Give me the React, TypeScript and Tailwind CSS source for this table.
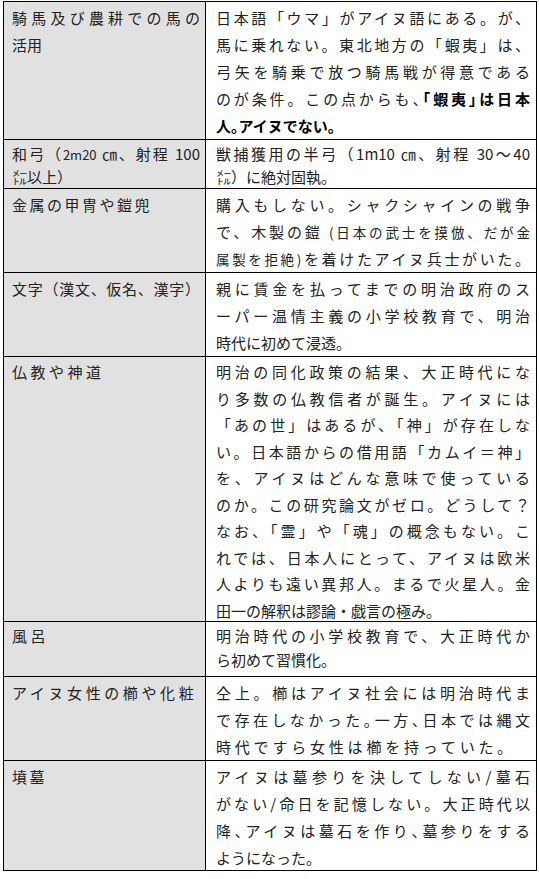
import type { ReactNode } from "react";

type Line = { c: ReactNode; j?: boolean; cls?: string };
type Row = { h: string; lh: string; left: Line[]; right: Line[] };

const B = ({ children }: { children: ReactNode }) => (
  <span className="font-bold text-black">{children}</span>
);

const Sm = ({ children }: { children: ReactNode }) => (
  <span className="text-[13.5px] leading-none">{children}</span>
);

// half-width punctuation, as Word squeezes it on full lines
const H = ({ children }: { children: ReactNode }) => (
  <span className="[font-feature-settings:'halt']">{children}</span>
);

const rows: Row[] = [
  {
    h: "h-[138px]",
    lh: "leading-[27px]",
    left: [{ c: "騎馬及び農耕での馬の", j: true }, { c: "活用" }],
    right: [
      { c: "日本語「ウマ」がアイヌ語にある。が、", j: true },
      { c: "馬に乗れない。東北地方の「蝦夷」は、", j: true },
      { c: "弓矢を騎乗で放つ騎馬戦が得意である", j: true },
      {
        c: (
          <>
            のが条件。この点からも<H>、</H>
            <B>
              <H>「</H>蝦夷<H>」</H>は日本
            </B>
          </>
        ),
        j: true,
      },
      {
        c: (
          <B>
            人<H>。</H>アイヌでない。
          </B>
        ),
      },
    ],
  },
  {
    h: "h-[49px]",
    lh: "leading-[23px]",
    left: [
      {
        c: (
          <>
            和弓（<span className="text-[13px] leading-none">2m20</span> ㎝、射程 100
          </>
        ),
        j: true,
      },
      { c: "㍍以上）" },
    ],
    right: [
      { c: "獣捕獲用の半弓（1m10 ㎝、射程 30～40", j: true },
      { c: "㍍）に絶対固執。" },
    ],
  },
  {
    h: "h-[84px]",
    lh: "leading-[27px]",
    left: [{ c: "金属の甲冑や鎧兜", cls: "tracking-[2.5px]" }],
    right: [
      { c: "購入もしない。シャクシャインの戦争", j: true },
      {
        c: (
          <>
            で、木製の鎧 <Sm>(日本の武士を摸倣、だが金</Sm>
          </>
        ),
        j: true,
      },
      {
        c: (
          <>
            <Sm>属製を拒絶)</Sm>を着けたアイヌ兵士がいた。
          </>
        ),
        j: true,
      },
    ],
  },
  {
    h: "h-[84px]",
    lh: "leading-[27px]",
    left: [{ c: "文字（漢文、仮名、漢字）", j: true }],
    right: [
      { c: "親に賃金を払ってまでの明治政府のス", j: true },
      { c: "ーパー温情主義の小学校教育で、明治", j: true },
      { c: "時代に初めて浸透。" },
    ],
  },
  {
    h: "h-[265px]",
    lh: "leading-[26.5px]",
    left: [{ c: "仏教や神道", cls: "tracking-[3.5px]" }],
    right: [
      { c: "明治の同化政策の結果、大正時代にな", j: true },
      { c: "り多数の仏教信者が誕生。アイヌには", j: true },
      { c: "「あの世」はあるが、「神」が存在しな", j: true },
      { c: "い。日本語からの借用語「カムイ＝神」", j: true },
      { c: "を、アイヌはどんな意味で使っている", j: true },
      { c: "のか。この研究論文がゼロ。どうして？", j: true },
      { c: "なお、「霊」や「魂」の概念もない。こ", j: true },
      { c: "れでは、日本人にとって、アイヌは欧米", j: true },
      { c: "人よりも遠い異邦人。まるで火星人。金", j: true },
      { c: "田一の解釈は謬論・戯言の極み。" },
    ],
  },
  {
    h: "h-[55px]",
    lh: "leading-[24px]",
    left: [{ c: "風呂", cls: "tracking-[3.5px]" }],
    right: [
      { c: "明治時代の小学校教育で、大正時代か", j: true },
      { c: "ら初めて習慣化。" },
    ],
  },
  {
    h: "h-[84px]",
    lh: "leading-[27px]",
    left: [{ c: "アイヌ女性の櫛や化粧", cls: "tracking-[3.6px]" }],
    right: [
      { c: "仝上。櫛はアイヌ社会には明治時代ま", j: true },
      {
        c: (
          <>
            で存在しなかった<H>。</H>一方<H>、</H>日本では縄文
          </>
        ),
        j: true,
      },
      { c: "時代ですら女性は櫛を持っていた。", cls: "tracking-[3.8px]" },
    ],
  },
  {
    h: "h-[110px]",
    lh: "leading-[27px]",
    left: [{ c: "墳墓", cls: "tracking-[2.5px]" }],
    right: [
      { c: "アイヌは墓参りを決してしない/墓石", j: true },
      { c: "がない/命日を記憶しない。大正時代以", j: true },
      {
        c: (
          <>
            降<H>、</H>アイヌは墓石を作り<H>、</H>墓参りをする
          </>
        ),
        j: true,
      },
      { c: "ようになった。" },
    ],
  },
];

function TextLine({ line }: { line: Line }) {
  const align = line.j ? "text-justify [text-align-last:justify]" : "text-left";
  return <div className={`whitespace-nowrap ${align} ${line.cls ?? ""}`}>{line.c}</div>;
}

export default function App() {
  return (
    <div className="min-h-[879px] bg-white pt-[1px] pl-[3px] font-['Noto_Sans_CJK_JP','Noto_Sans',sans-serif] text-[15px] text-[#222]">
      <div className="w-[534px] border-t border-r border-l border-black">
        {rows.map((row, i) => (
          <div
            key={i}
            className={`grid grid-cols-[202px_1fr] grid-rows-[minmax(0,1fr)] overflow-hidden border-b border-black ${row.h} ${row.lh}`}
          >
            <div className="border-r border-black bg-[#e1e1e1] pt-[2px] pr-[5px] pl-[8px]">
              {row.left.map((l, k) => (
                <TextLine key={k} line={l} />
              ))}
            </div>
            <div className="pt-[2px] pr-[6px] pl-[10px]">
              {row.right.map((l, k) => (
                <TextLine key={k} line={l} />
              ))}
            </div>
          </div>
        ))}
      </div>
    </div>
  );
}
